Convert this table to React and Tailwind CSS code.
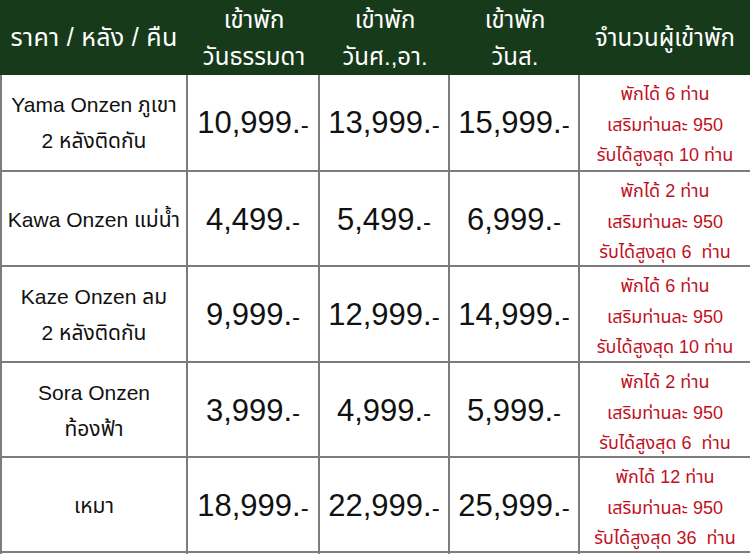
import React from "react";

const cols = "grid grid-cols-[188px_132px_130px_130px_170px]";
const font = { fontFamily: '"Liberation Sans", "Noto Sans Thai", "Noto Sans", sans-serif' };

const rows = [
  { name: ["Yama Onzen ภูเขา", "2 หลังติดกัน"], p: ["10,999", "13,999", "15,999"], g: ["พักได้ 6 ท่าน", "เสริมท่านละ 950", "รับได้สูงสุด 10 ท่าน"], h: "h-[97px]" },
  { name: ["Kawa Onzen แม่น้ำ"], p: ["4,499", "5,499", "6,999"], g: ["พักได้ 2 ท่าน", "เสริมท่านละ 950", "รับได้สูงสุด 6  ท่าน"], h: "h-[95px]" },
  { name: ["Kaze Onzen ลม", "2 หลังติดกัน"], p: ["9,999", "12,999", "14,999"], g: ["พักได้ 6 ท่าน", "เสริมท่านละ 950", "รับได้สูงสุด 10 ท่าน"], h: "h-[96px]" },
  { name: ["Sora Onzen", "ท้องฟ้า"], p: ["3,999", "4,999", "5,999"], g: ["พักได้ 2 ท่าน", "เสริมท่านละ 950", "รับได้สูงสุด 6  ท่าน"], h: "h-[95px]" },
  { name: ["เหมา"], p: ["18,999", "22,999", "25,999"], g: ["พักได้ 12 ท่าน", "เสริมท่านละ 950", "รับได้สูงสุด 36  ท่าน"], h: "h-[95px]" },
];

export default function App() {
  return (
    <div className="w-[750px] h-[555px] bg-white overflow-hidden" style={font}>
      <div className={`${cols} h-[75px] bg-[#173a1b] text-white text-[24px] leading-[37px]`}>
        <div className="flex items-center justify-center text-[25px] tracking-[0.3px]">ราคา / หลัง / คืน</div>
        <div className="flex flex-col items-center justify-center"><span>เข้าพัก</span><span>วันธรรมดา</span></div>
        <div className="flex flex-col items-center justify-center"><span>เข้าพัก</span><span>วันศ.,อา.</span></div>
        <div className="flex flex-col items-center justify-center"><span>เข้าพัก</span><span>วันส.</span></div>
        <div className="flex items-center justify-center">จำนวนผู้เข้าพัก</div>
      </div>
      {rows.map((r, i) => (
        <div key={i} className={`${cols} ${r.h} border-b-2 border-[#7c7c7c]`}>
          <div className="flex flex-col items-center justify-center border-l-2 border-r-2 border-[#7c7c7c] text-[21px] leading-[36px] text-[#111]">
            {r.name.map((n, j) => <span key={j} className="whitespace-pre">{n}</span>)}
          </div>
          {r.p.map((p, j) => (
            <div key={j} className="flex items-center justify-center border-r-2 border-[#7c7c7c] text-[31px] text-[#111]">
              <span>{p}.<span className="text-[24px]">-</span></span>
            </div>
          ))}
          <div className="flex flex-col items-center justify-center pt-[4px] text-[18px] leading-[30.5px] text-[#c0101e]">
            {r.g.map((g, j) => <span key={j} className="whitespace-pre">{g}</span>)}
          </div>
        </div>
      ))}
    </div>
  );
}
